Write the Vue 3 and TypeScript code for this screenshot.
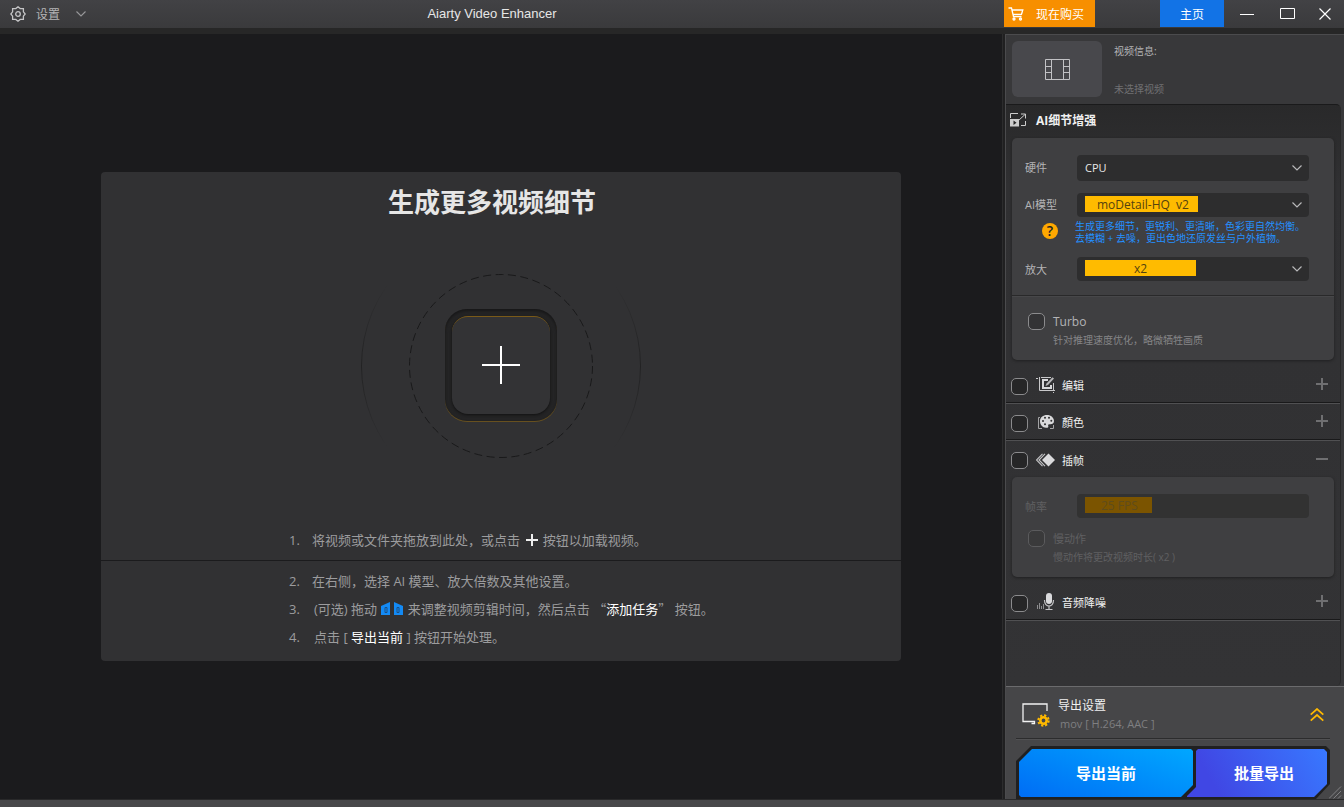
<script setup lang="ts">
import { ref } from 'vue'

const hardware = ref('CPU')
const model = ref('moDetail-HQ  v2')
const scale = ref('x2')
const frameRate = ref('25 FPS')
const turbo = ref(false)
const slowMotion = ref(false)
const edit = ref(false)
const color = ref(false)
const interpolation = ref(false)
const denoise = ref(false)
</script>

<template>
  <div class="app">
    <header class="titlebar">
      <div class="titlebar-main">
        <button class="settings" type="button">
          <svg width="16" height="16" viewBox="0 0 16 16" fill="none" stroke="#c4c4c6" stroke-width="1.3">
            <path d="M8 .8 10.200 2.600H13.400V5.800L15.200 8 13.400 10.200V13.400H10.200L8 15.200 5.800 13.400H2.600V10.200L.8 8 2.600 5.800V2.600H5.800Z" />
            <circle cx="8" cy="8" r="2.300" />
          </svg>
          <span>设置</span>
          <svg class="settings-arrow" width="10" height="6" viewBox="0 0 10 6" fill="none" stroke="#98989a" stroke-width="1.100">
            <path d="M.5.500 5 5 9.500.500" />
          </svg>
        </button>
        <h1>Aiarty Video Enhancer</h1>
      </div>
      <button class="buy" type="button">
        <svg width="16" height="14" viewBox="0 0 16 14" fill="none" stroke="#fff" stroke-width="1.300">
          <path d="M.5 1H3.500L5.500 9.500H13.500M3.900 3H14.800L13.500 7.300H5" />
          <circle cx="6" cy="12" r="1" /><circle cx="12.500" cy="12" r="1" />
        </svg>
        <span>现在购买</span>
      </button>
      <button class="home" type="button">主页</button>
      <button class="win" type="button" aria-label="最小化">
        <svg width="14" height="12" viewBox="0 0 14 12"><path d="M0 6.500H14" stroke="#fff" /></svg>
      </button>
      <button class="win" type="button" aria-label="最大化">
        <svg width="15" height="11" viewBox="0 0 15 11"><path d="M.5.500H14.500V10.500H.5Z" fill="none" stroke="#fff" /></svg>
      </button>
      <button class="win" type="button" aria-label="关闭">
        <svg width="12" height="12" viewBox="0 0 12 12"><path d="M.5.500 11.500 11.500M11.500.500.500 11.500" stroke="#fff" stroke-width="1.200" /></svg>
      </button>
    </header>

    <div class="workspace">
      <main class="canvas">
        <section class="welcome">
          <div class="drop">
            <h2>生成更多视频细节</h2>
            <div class="target">
              <svg class="rings" width="280" height="280" viewBox="0 0 280 280" fill="none">
                <defs>
                  <linearGradient id="ringFade" x1="0" y1="0" x2="0" y2="1">
                    <stop offset=".2" stop-color="#222223" stop-opacity="0" />
                    <stop offset=".5" stop-color="#222223" />
                    <stop offset=".8" stop-color="#222223" stop-opacity="0" />
                  </linearGradient>
                </defs>
                <circle cx="140" cy="140" r="139.500" stroke="url(#ringFade)" />
                <circle cx="140" cy="140" r="91.500" stroke="#19191a" stroke-dasharray="8 4.500" />
              </svg>
              <button class="add" type="button" aria-label="添加视频">
                <span class="add-face">
                  <svg width="38" height="38" viewBox="0 0 38 38"><path d="M19 0V38M0 19H38" stroke="#fff" stroke-width="2" /></svg>
                </span>
              </button>
            </div>
            <ol class="steps">
              <li>
                <span class="num">1.</span>
                <p>将视频或文件夹拖放到此处，或点击
                  <svg class="plus" width="12" height="12" viewBox="0 0 12 12"><path d="M6 0V12M0 6H12" stroke="#eee" stroke-width="2" /></svg>
                  按钮以加载视频。</p>
              </li>
            </ol>
          </div>
          <ol class="steps rest" start="2">
            <li><span class="num">2.</span><p>在右侧，选择 AI 模型、放大倍数及其他设置。</p></li>
            <li>
              <span class="num">3.</span>
              <p>(可选) 拖动
                <svg class="trim" width="22" height="13" viewBox="0 0 22 13">
                  <path d="M0 4 9 0V13H0ZM13 0 22 4V13H13Z" fill="#138af5" />
                  <path d="M4 5.500H6V10.500H4ZM16 5.500H18V10.500H16Z" fill="none" stroke="#1c4f82" />
                </svg>
                来调整视频剪辑时间，然后点击 <span class="quoted">“<b>添加任务</b>”</span> 按钮。</p>
            </li>
            <li><span class="num">4.</span><p>点击 [ <b>导出当前</b> ] 按钮开始处理。</p></li>
          </ol>
        </section>
      </main>

      <aside class="panel">
        <section class="info">
          <div class="thumb">
            <svg width="25" height="21" viewBox="0 0 25 21" fill="none" stroke="#c2c2c5">
              <path d="M.5.500H24.500V20.500H.5ZM6.500.500V20.500M18.500.500V20.500M.5 7.500H6.500M.5 13.500H6.500M18.500 7.500H24.500M18.500 13.500H24.500" />
            </svg>
          </div>
          <div class="info-text">
            <p>视频信息:</p>
            <p class="none">未选择视频</p>
          </div>
        </section>

        <div class="settings-list">
          <section>
            <h3 class="ai-head">
              <svg width="17" height="14" viewBox="0 0 17 14" fill="none" stroke="#ccc">
                <path d="M.5 5V.5H8M11 12.500H15.500V8M8.500 7.500 15 1.500M11 1H15.500V5.500" />
                <path d="M0 6H9V13.500H0Z" fill="#ccc" stroke="none" />
                <path d="M3.500 7.500 6.500 9.700 3.500 12Z" fill="#222" stroke="none" />
              </svg>
              <span>AI细节增强</span>
            </h3>
            <div class="card ai-card">
              <div class="fields">
                <label for="hardware">硬件</label>
                <div class="pick">
                  <select id="hardware" v-model="hardware"><option>CPU</option></select>
                  <svg class="arrow" width="10" height="6" viewBox="0 0 10 6" fill="none" stroke="#b8b8ba" stroke-width="1.200"><path d="M.5.500 5 5 9.500.500" /></svg>
                </div>
                <label for="model">AI模型</label>
                <div class="pick">
                  <select id="model" v-model="model" class="model"><option value="moDetail-HQ  v2">moDetail-HQ&nbsp; v2</option></select>
                  <svg class="arrow" width="10" height="6" viewBox="0 0 10 6" fill="none" stroke="#b8b8ba" stroke-width="1.200"><path d="M.5.500 5 5 9.500.500" /></svg>
                </div>
                <button class="help" type="button" aria-label="帮助">?</button>
                <p class="hint">生成更多细节，更锐利、更清晰，色彩更自然均衡。<br />去模糊 + 去噪，更出色地还原发丝与户外植物。</p>
                <label for="scale">放大</label>
                <div class="pick">
                  <select id="scale" v-model="scale" class="scale"><option>x2</option></select>
                  <svg class="arrow" width="10" height="6" viewBox="0 0 10 6" fill="none" stroke="#b8b8ba" stroke-width="1.200"><path d="M.5.500 5 5 9.500.500" /></svg>
                </div>
              </div>
              <div class="turbo">
                <label class="check"><input v-model="turbo" type="checkbox" /><span>Turbo</span></label>
                <p class="note">针对推理速度优化，略微牺牲画质</p>
              </div>
            </div>
          </section>

          <section class="group first">
            <label><input v-model="edit" type="checkbox" />
              <svg width="20" height="18" viewBox="0 0 20 18" fill="none">
                <path d="M0 2.500H2M3.500 1V14.500H19M17.500 7V14M17.500 16V17" stroke="#c8c8ca" />
                <path d="M6 3H12V5H8V11H14V9H16V13H6Z" fill="#d8d8da" />
                <path d="M9.500 10 10.500 7.500 16.500 1.200 18 2.600 12 9Z" fill="#b8b8ba" />
                <path d="M5 1.500H15" stroke="#c8c8ca" />
              </svg>
              <span>编辑</span></label>
            <button class="fold" type="button" aria-label="展开编辑"></button>
          </section>
          <section class="group">
            <label><input v-model="color" type="checkbox" />
              <svg width="20" height="18" viewBox="0 0 20 18" fill="none">
                <path d="M4 4.500H2.500V15.500H6M14 15.500H17.500V12" stroke="#a4a4a6" />
                <path d="M11 2C15 2 18 4.700 18 8 18 10.500 16 11.500 13.500 11.200 12 11.100 12 12 12.300 13 12.600 14.500 11.500 15 10 14.800 6.500 14.500 4 11.500 4 8.200 4 4.500 7 2 11 2Z" fill="#dadadc" />
                <g fill="#303032"><circle cx="9" cy="4.800" r="1" /><circle cx="13" cy="4.800" r="1" /><circle cx="15.300" cy="7.800" r="1" /><circle cx="7" cy="8" r="1" /><circle cx="9" cy="11.300" r="1" /></g>
              </svg>
              <span>顏色</span></label>
            <button class="fold" type="button" aria-label="展开顏色"></button>
          </section>
          <section class="group open">
            <label><input v-model="interpolation" type="checkbox" />
              <svg width="20" height="18" viewBox="0 0 20 18" fill="none">
                <path d="M12.500 2.500 19 9 12.500 15.500 6 9Z" fill="#dadadc" />
                <path d="M6.500 2.800.500 9 6.500 15.200M9 2.800 3 9 9 15.200" stroke="#c4c4c6" stroke-width="1.100" />
              </svg>
              <span>插帧</span></label>
            <button class="fold minus" type="button" aria-label="收起插帧"></button>
          </section>
          <div class="card fps-card">
            <div class="fps-row">
              <label for="fps">帧率</label>
              <input id="fps" v-model="frameRate" class="fps" type="text" disabled />
            </div>
            <label class="check"><input v-model="slowMotion" type="checkbox" disabled /><span>慢动作</span></label>
            <p class="note">慢动作将更改视频时长( x2 )</p>
          </div>
          <section class="group audio">
            <label><input v-model="denoise" type="checkbox" />
              <svg width="20" height="18" viewBox="0 0 20 18" fill="none">
                <path d="M1.500 12V16M3.500 10V16M5.500 13V16M7.500 11V16" stroke="#8c8c8e" />
                <rect x="10" y="0" width="6" height="11" rx="3" fill="#dadadc" />
                <path d="M8.500 7C8.500 15 17.500 15 17.500 7M13 13.500V16.500M9.500 16.500H16.500" stroke="#c4c4c6" stroke-width="1.200" />
              </svg>
              <span>音频降噪</span></label>
            <button class="fold" type="button" aria-label="展开音频降噪"></button>
          </section>
        </div>

        <footer class="export">
          <div class="export-info">
            <svg width="28" height="24" viewBox="0 0 28 24" fill="none">
              <path d="M25 8V1H1V18.500H12.500V20.500H9.500" stroke="#f2f2f2" stroke-width="1.300" />
              <circle cx="21.500" cy="17.500" r="3.200" stroke="#ffb900" stroke-width="2.600" />
              <circle cx="21.500" cy="17.500" r="5.200" stroke="#ffb900" stroke-width="2" stroke-dasharray="2.200 1.884" />
            </svg>
            <div class="export-text">
              <h3>导出设置</h3>
              <p>mov [ H.264, AAC ]</p>
            </div>
            <button class="expand" type="button" aria-label="展开导出设置">
              <svg width="14" height="14" viewBox="0 0 14 14" fill="none" stroke="#ffb900" stroke-width="1.700"><path d="M.7 6.700 7 1 13.300 6.700M.7 12.700 7 7 13.300 12.700" /></svg>
            </button>
          </div>
          <div class="actions">
            <button class="current" type="button">导出当前</button>
            <button class="batch" type="button">批量导出</button>
          </div>
          <svg class="grip" width="13" height="13" viewBox="0 0 13 13" stroke="#808082"><path d="M0 12.500 12 .5M4.500 12.500 12 5M9 12.500 12 9.500" /></svg>
        </footer>
      </aside>
    </div>
    <div class="statusbar"></div>
  </div>
</template>

<style>
html,
body {
  margin: 0;
  background: #1b1b1d;
}
</style>

<style scoped>
* {
  box-sizing: border-box;
}
.app {
  display: flex;
  flex-direction: column;
  min-height: 100vh;
  font-family: "Open Sans", "Noto Sans CJK SC", sans-serif;
  font-size: 12px;
  color: #b4b4b6;
}
h1, h2, h3, p, ol {
  margin: 0;
  padding: 0;
  font-weight: normal;
}
svg {
  display: block;
  flex: none;
}
button {
  margin: 0;
  padding: 0;
  border: 0;
  background: none;
  color: inherit;
  font: inherit;
}
.titlebar {
  display: flex;
  height: 28px;
  background: linear-gradient(#424245, #3a3a3c);
}
.titlebar-main {
  flex: 1;
  display: grid;
  grid-template-columns: 1fr auto 1fr;
  align-items: center;
  padding-right: 20px;
}
.settings {
  display: flex;
  align-items: center;
  justify-self: start;
  gap: 10px;
  height: 28px;
  padding-left: 10px;
}
.settings-arrow {
  margin-left: 6px;
}
h1 {
  padding-bottom: 2px;
  font-family: "Liberation Sans", Arial, sans-serif;
  font-size: 13px;
  color: #e6e6e6;
}
.buy {
  display: flex;
  align-items: center;
  gap: 12px;
  width: 91px;
  height: 27px;
  margin-right: 65px;
  padding-left: 4px;
  background: #f78f00;
  color: #fff;
}
.home {
  width: 64px;
  height: 27px;
  background: #1273e6;
  color: #fff;
}
.win {
  display: grid;
  place-items: center;
  width: 34px;
  height: 27px;
}
.win:nth-of-type(3) {
  width: 46px;
}
.win:last-child {
  width: 40px;
  padding-left: 2px;
}
.workspace {
  flex: 1;
  display: flex;
  border-top: 6px solid #272727;
  background: #202021;
}
.canvas {
  flex: 1;
  display: flex;
  align-items: center;
  justify-content: center;
  border-right: 1px solid #2c2c2d;
  background: #1b1b1d;
}
.welcome {
  width: 80%;
  max-width: 800px;
  border-radius: 4px;
  background: #313133;
}
.drop {
  display: flex;
  flex-direction: column;
  padding: 12px 0 6px;
  border-bottom: 1px solid #1b1b1d;
}
h2 {
  padding-right: 18px;
  font-size: 26px;
  line-height: 36px;
  font-weight: 700;
  text-align: center;
  color: #e6e6e6;
}
.target {
  display: grid;
  place-items: center;
  margin: 6px 0 20px;
}
.rings,
.add {
  grid-area: 1 / 1;
}
.add {
  width: 112px;
  height: 112px;
  margin-bottom: 2px;
  padding: 7px;
  border-radius: 22px;
  background: #242425;
  box-shadow: 0 1px 0 #67501f, inset 0 2px 3px #171718;
}
.add-face {
  display: grid;
  place-items: center;
  height: 98px;
  padding-bottom: 2px;
  border-top: 1px solid #7a5a18;
  border-radius: 16px;
  background: #333335;
  box-shadow: 0 1px 3px #111;
}
.steps {
  list-style: none;
  padding-left: 23.500%;
  font-size: 13px;
  line-height: 28px;
  color: #9c9c9e;
}
.steps li {
  display: flex;
}
.num {
  flex: 0 0 23px;
}
.steps b {
  font-weight: 400;
  color: #fff;
}
.quoted {
  font-family: "Noto Sans CJK SC", sans-serif;
}
.plus,
.trim {
  display: inline-block;
  vertical-align: -1px;
}
.plus {
  margin: 0 1px 0 3px;
}
.trim {
  margin: 0 1px;
}
.rest {
  padding-top: 6px;
  padding-bottom: 10px;
}
.rest li:nth-child(n + 2) p {
  padding-left: 2px;
}
.panel {
  flex: 0 0 339px;
  display: flex;
  flex-direction: column;
  margin-left: 2px;
  border-top: 1px solid #4b4b4d;
  border-left: 1px solid #4b4b4d;
  background: #38383a;
}
.info {
  display: flex;
  gap: 12px;
  padding: 6px 6px 7px;
}
.thumb {
  display: grid;
  place-items: center;
  width: 90px;
  height: 56px;
  border-radius: 6px;
  background: #48484c;
}
.info-text {
  display: flex;
  flex-direction: column;
  justify-content: space-between;
  font-size: 10px;
  line-height: 16px;
  padding-top: 2px;
}
.info-text .none {
  color: #707072;
}
.settings-list {
  flex: 1;
  margin-right: 3px;
  border-top: 1px solid #1a1a1b;
  border-right: 1px solid #29292a;
  border-radius: 0 5px 5px 0;
  background: linear-gradient(#29292a, #303032 80px, #333335);
}
.ai-head {
  display: flex;
  align-items: center;
  gap: 9px;
  height: 33px;
  padding: 0 0 3px 4px;
  font-size: 12px;
  font-weight: 700;
  color: #f0f0f0;
}
.card {
  margin: 0 6px;
  border-radius: 5px;
  background: #3f3f41;
  box-shadow: 0 1px 3px #202021;
}
.fields {
  display: grid;
  grid-template-columns: 52px 1fr;
  align-items: center;
  padding: 17px 25px 14px 13px;
  border-bottom: 1px solid #29292a;
  font-size: 11px;
}
.pick {
  display: grid;
  align-items: center;
  margin-bottom: 12px;
}
.fields > label {
  margin-bottom: 14px;
}
.fields > label[for="model"] {
  margin-bottom: 5px;
}
.fields > label[for="model"] + .pick {
  margin-bottom: 3px;
}
.fields > label[for="scale"],
.fields > label[for="scale"] + .pick {
  margin-bottom: 0;
}
select,
.fps {
  appearance: none;
  width: 100%;
  height: 24px;
  margin: 0;
  padding: 0 8px 2px;
  border: 0;
  border-radius: 4px;
  background: #2d2d2e;
  color: #e8e8e8;
  font: 11px "Open Sans", "Noto Sans CJK SC", sans-serif;
}
#hardware {
  height: 26px;
}
.pick > * {
  grid-area: 1 / 1;
}
.arrow {
  justify-self: end;
  margin-right: 7px;
  pointer-events: none;
}
select.model {
  padding: 0 8px 2px 20px;
  background: linear-gradient(#ffbb00, #ffbb00) 8px 3px / 113px 16px no-repeat #2d2d2e;
  color: #54420f;
  font-size: 12px;
}
select.scale {
  padding: 0 8px 2px 57px;
  background: linear-gradient(#ffbb00, #ffbb00) 8px 3px / 111px 16px no-repeat #2d2d2e;
  color: #54420f;
  font-size: 12px;
}
.help {
  width: 16px;
  height: 16px;
  margin-bottom: 15px;
  margin-left: 17px;
  border-radius: 50%;
  background: #ffa800;
  color: #222;
  font-size: 14px;
  line-height: 16px;
  font-weight: 600;
}
.hint {
  margin-bottom: 13px;
  margin-left: -2px;
  font-size: 10px;
  line-height: 12px;
  white-space: nowrap;
  color: #2490ff;
}
.turbo {
  padding: 15px 16px 10px;
  border-top: 1px solid #474749;
}
.check {
  display: flex;
  align-items: center;
  gap: 8px;
  height: 18px;
}
.note {
  padding-left: 25px;
  font-size: 10px;
  line-height: 20px;
  color: #858587;
}
input[type="checkbox"] {
  appearance: none;
  flex: none;
  width: 17px;
  height: 17px;
  margin: 0;
  border: 1px solid #8b8b8d;
  border-radius: 5px;
  background: #262627;
}
.check input[type="checkbox"] {
  background: #333335;
}
.group {
  display: flex;
  align-items: center;
  justify-content: space-between;
  height: 37px;
  padding: 2px 12px 0 5px;
  border-bottom: 1px solid #19191a;
  box-shadow: 0 1px 0 #505052;
  font-size: 11px;
  color: #f0f0f0;
}
.group.first {
  margin-top: 6px;
}
.group.open {
  border: 0;
  box-shadow: none;
}
.group.audio {
  margin-top: 6px;
}
.group label {
  display: flex;
  align-items: center;
}
.group input[type="checkbox"] {
  margin-top: 2px;
}
.group label svg {
  margin: 0 6px 0 8px;
}
.fold {
  width: 12px;
  height: 12px;
  margin-bottom: 2px;
  background:
    linear-gradient(#6f6f71, #6f6f71) center / 12px 2px no-repeat,
    linear-gradient(#6f6f71, #6f6f71) center / 2px 12px no-repeat;
}
.fold.minus {
  background: linear-gradient(#6f6f71, #6f6f71) center / 12px 2px no-repeat;
}
.fps-card {
  padding: 17px 25px 10px 13px;
  font-size: 11px;
  color: #606062;
}
.fps-row {
  display: grid;
  grid-template-columns: 52px 1fr;
  align-items: center;
  margin-bottom: 11px;
}
.fps {
  padding: 0 24px 2px;
  background: linear-gradient(#7b5400, #7b5400) 8px 3px / 67px 16px no-repeat #323232;
  color: #5f4c1c;
  font-size: 12px;
}
.fps-card .check,
.fps-card .note {
  margin-left: 3px;
  color: #606062;
}
.fps-card input[type="checkbox"] {
  border-color: #5b5b5d;
  background: #3a3a3b;
}
.export {
  position: relative;
  padding: 0 14px 0 10px;
  border-top: 1px solid #6b6b6d;
  background: #464648;
}
.export-info {
  display: flex;
  align-items: center;
  gap: 8px;
  height: 52px;
  padding: 4px 6px 0 6px;
  border-bottom: 1px solid #2c2c2d;
  box-shadow: 0 1px 0 #515153;
}
.export-text {
  flex: 1;
}
.export-text h3 {
  font-size: 12px;
  line-height: 18px;
  color: #f0f0f0;
}
.export-text p {
  padding-left: 2px;
  font-size: 11px;
  line-height: 18px;
  color: #7f7f81;
}
.actions {
  display: flex;
  margin-top: 7px;
  padding: 3px 3px 2px;
  background: #202021;
  clip-path: polygon(0 15px, 15px 0, calc(100% - 4px) 0, 100% 4px, 100% 38px, calc(100% - 14px) 100%, 0 100%);
}
.actions button {
  height: 48px;
  padding-bottom: 2px;
  font-size: 15px;
  font-weight: 700;
  color: #fff;
}
.actions .current {
  flex: 174 0 0;
  background: linear-gradient(20deg, #006df5, #00a7ff);
  clip-path: polygon(0 13px, 13px 0, calc(100% - 2px) 0, 100% 2px, 100% 36px, calc(100% - 12px) 100%, 2px 100%, 0 calc(100% - 2px));
}
.actions .batch {
  flex: 126 0 14px;
  margin-left: -6px;
  padding-left: 14px;
  background: linear-gradient(60deg, #4047e4 20%, #3878ff);
  clip-path: polygon(11px 0, calc(100% - 3px) 0, 100% 3px, 100% 35px, calc(100% - 13px) 100%, 0 100%, 0 47px, 9px 38px, 9px 2px);
}
.grip {
  position: absolute;
  right: 2px;
  bottom: 0;
}
.statusbar {
  height: 8px;
  border-top: 1px solid #29292a;
  background: #48484a;
}
</style>
